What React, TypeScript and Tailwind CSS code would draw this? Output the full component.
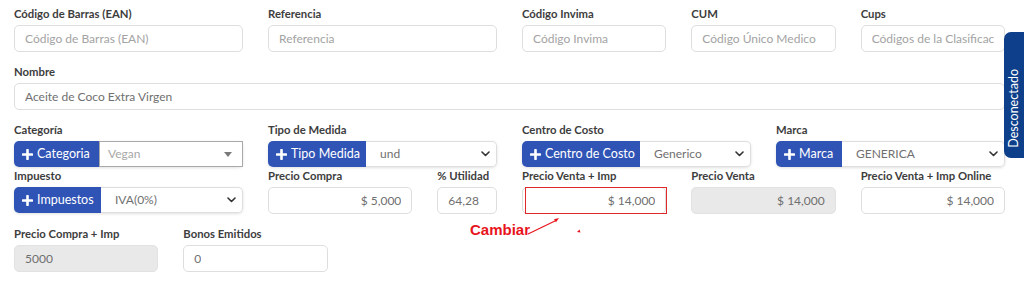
import React from "react";

const font = { fontFamily: "Lato, 'Noto Sans', sans-serif" };

function Label({ children }: { children: React.ReactNode }) {
  return <div className="h-[16px] flex items-center text-[11.3px] font-bold text-[#3d3d3d] leading-none whitespace-nowrap">{children}</div>;
}

function Input({ value, placeholder, disabled, right, red }: { value?: string; placeholder?: string; disabled?: boolean; right?: boolean; red?: boolean }) {
  return (
    <div className="relative mt-[3px]">
      <div
        className={`h-[27px] rounded-[5px] border flex items-center px-[10px] text-[12px] whitespace-nowrap ${
          disabled ? "bg-[#e9e9e9] border-[#e2e2e2]" : "bg-white border-[#dedede]"
        } ${right ? "justify-end" : ""}`}
      >
        <span className={`block overflow-hidden ${value ? "text-[#6f6f6f]" : "text-[#a3a3a3]"}`}>{value ?? placeholder}</span>
      </div>
      {red && <div className="absolute left-[3px] -right-[1px] top-[0px] bottom-[0px] border-[1.3px] border-[#e0272a]" />}
    </div>
  );
}

function Plus() {
  return (
    <svg width="11" height="11" viewBox="0 0 11 11" className="shrink-0">
      <path d="M5.5 1v9M1 5.5h9" stroke="white" strokeWidth="2.6" strokeLinecap="round" />
    </svg>
  );
}

function Chevron() {
  return (
    <svg width="9" height="6" viewBox="0 0 9 6" className="shrink-0">
      <path d="M1 1l3.5 3.5L8 1" stroke="#333" strokeWidth="1.6" fill="none" strokeLinecap="round" strokeLinejoin="round" />
    </svg>
  );
}

function Group({ btn, btnW, value, caret }: { btn: string; btnW: number; value: string; caret?: boolean }) {
  return (
    <div className="mt-[3px] h-[26px] flex rounded-[5px] shadow-[0_1px_3px_rgba(0,0,0,0.12)]">
      <div
        className="h-full bg-[#3054b6] rounded-l-[5px] flex items-center gap-[4px] pl-[8px] text-white text-[12.5px] shrink-0"
        style={{ width: btnW }}
      >
        <Plus />
        <span>{btn}</span>
      </div>
      {caret ? (
        <div className="flex-1 h-full border border-[#a9a9a9] bg-white flex items-center justify-between pl-[8px] pr-[10px] text-[12px] text-[#a8a8a8]">
          <span>{value}</span>
          <svg width="8" height="5" viewBox="0 0 8 5">
            <path d="M0 0h8L4 5z" fill="#7a7a7a" />
          </svg>
        </div>
      ) : (
        <div className="flex-1 h-full border border-l-0 border-[#dedede] rounded-r-[5px] bg-white flex items-center justify-between pl-[14px] pr-[6px] text-[12px] text-[#707070]">
          <span>{value}</span>
          <Chevron />
        </div>
      )}
    </div>
  );
}

export default function App() {
  return (
    <div className="relative w-[1024px] h-[283px] bg-white overflow-hidden" style={font}>
      <div className="ml-[14px] w-[991px] pt-[6px]">
        <div className="grid grid-cols-12 gap-x-[25px]">
          <div className="col-span-3">
            <Label>Código de Barras (EAN)</Label>
            <Input placeholder="Código de Barras (EAN)" />
          </div>
          <div className="col-span-3">
            <Label>Referencia</Label>
            <Input placeholder="Referencia" />
          </div>
          <div className="col-span-2">
            <Label>Código Invima</Label>
            <Input placeholder="Código Invima" />
          </div>
          <div className="col-span-2">
            <Label>CUM</Label>
            <Input placeholder="Código Único Medico" />
          </div>
          <div className="col-span-2">
            <Label>Cups</Label>
            <Input placeholder="Códigos de la Clasificac" />
          </div>
        </div>

        <div className="mt-[12px]">
          <Label>Nombre</Label>
          <Input value="Aceite de Coco Extra Virgen" />
        </div>

        <div className="mt-[12px] grid grid-cols-12 gap-x-[25px]">
          <div className="col-span-3">
            <Label>Categoría</Label>
            <Group btn="Categoria" btnW={85} value="Vegan" caret />
          </div>
          <div className="col-span-3">
            <Label>Tipo de Medida</Label>
            <Group btn="Tipo Medida" btnW={98} value="und" />
          </div>
          <div className="col-span-3">
            <Label>Centro de Costo</Label>
            <Group btn="Centro de Costo" btnW={118} value="Generico" />
          </div>
          <div className="col-span-3">
            <Label>Marca</Label>
            <Group btn="Marca" btnW={66} value="GENERICA" />
          </div>
        </div>

        <div className="mt-[1px] grid grid-cols-12 gap-x-[25px]">
          <div className="col-span-3">
            <Label>Impuesto</Label>
            <Group btn="Impuestos" btnW={87} value="IVA(0%)" />
          </div>
          <div className="col-span-2">
            <Label>Precio Compra</Label>
            <Input value="$ 5,000" right />
          </div>
          <div className="col-span-1">
            <Label>% Utilidad</Label>
            <Input value="64,28" />
          </div>
          <div className="col-span-2">
            <Label>Precio Venta + Imp</Label>
            <Input value="$ 14,000" right red />
          </div>
          <div className="col-span-2">
            <Label>Precio Venta</Label>
            <Input value="$ 14,000" right disabled />
          </div>
          <div className="col-span-2">
            <Label>Precio Venta + Imp Online</Label>
            <Input value="$ 14,000" right />
          </div>
        </div>

        <div className="mt-[12px] grid grid-cols-12 gap-x-[25px]">
          <div className="col-span-2">
            <Label>Precio Compra + Imp</Label>
            <Input value="5000" disabled />
          </div>
          <div className="col-span-2">
            <Label>Bonos Emitidos</Label>
            <Input value="0" />
          </div>
        </div>
      </div>

      {/* annotation */}
      <div
        className="absolute left-[470px] top-[219px] text-[15px] font-bold text-[#e8141b]"
        style={{ fontFamily: "'Liberation Sans', Arial, sans-serif" }}
      >
        Cambiar
      </div>
      <svg className="absolute left-[525px] top-[212px]" width="60" height="24" viewBox="0 0 60 24">
        <path d="M3 22L32 8" stroke="#e8141b" strokeWidth="1.2" />
        <path d="M34 6l-5 1.2 2 3z" fill="#e8141b" />
        <path d="M52 20l2.5 -2.5 1 3z" fill="#e8141b" />
      </svg>

      {/* side tab */}
      <div className="absolute right-0 top-[32px] w-[20px] h-[126px] bg-[#0d3f8b] rounded-l-[7px] flex items-end justify-center pb-[10px]">
        <div className="w-[20px] h-[80px] flex items-center justify-center">
          <span className="-rotate-90 whitespace-nowrap text-white text-[12.5px]">Desconectado</span>
        </div>
      </div>
    </div>
  );
}
